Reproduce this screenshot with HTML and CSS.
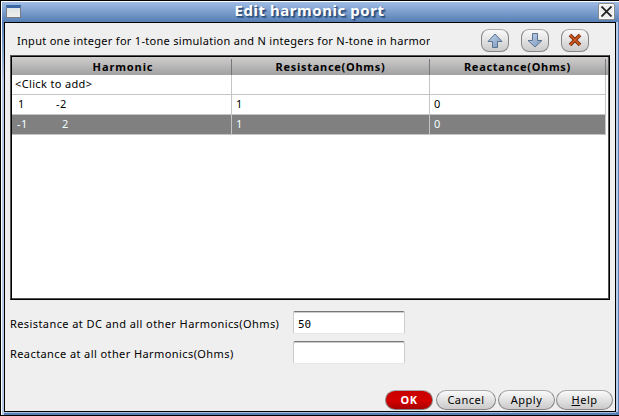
FILE: index.html
```html
<!DOCTYPE html>
<html lang="en">
<head>
<meta charset="utf-8">
<title>Edit harmonic port</title>
<link rel="stylesheet" href="styles.css">
</head>
<body>
<div class="window">
  <header class="titlebar">
    <span class="win-icon"></span>
    <h1>Edit harmonic port</h1>
    <button class="close" aria-label="Close"><svg width="11" height="11" viewBox="0 0 11 11"><path d="M.5.5 10.500 10.500M10.500.5.5 10.500" stroke="#222" stroke-width="1.800"/></svg></button>
  </header>
  <main class="content">
    <div class="toolbar">
      <p class="hint">Input one integer for 1-tone simulation and N integers for N-tone in harmon</p>
      <div class="tools">
        <button class="btn tool" aria-label="Move up"><svg width="16" height="15" viewBox="0 0 16 15"><defs><linearGradient id="blue" x2="1" y2="1"><stop stop-color="#c6d8ed"/><stop offset="1" stop-color="#7794b8"/></linearGradient></defs><path d="M8 1 15 8.500H10.500V14.500H5.500V8.500H1Z" fill="url(#blue)" stroke="#5a7391"/></svg></button>
        <button class="btn tool" aria-label="Move down"><svg width="16" height="15" viewBox="0 0 16 15"><path d="M8 14 1 7.500H5.500V.5H10.500V7.500H15Z" fill="url(#blue)" stroke="#5a7391"/></svg></button>
        <button class="btn tool" aria-label="Delete"><svg width="14" height="14" viewBox="0 0 14 14"><path d="M2 2 12 12M12 2 2 12" stroke="#74280e" stroke-width="3.600"/><path d="M2 2 12 12M12 2 2 12" stroke="#d9601f" stroke-width="1.600"/></svg></button>
      </div>
    </div>
    <div class="table">
      <div class="row head"><span class="harmonic">Harmonic</span><span>Resistance(Ohms)</span><span>Reactance(Ohms)</span></div>
      <div class="row"><span class="add">&lt;Click to add&gt;</span><span></span><span></span></div>
      <div class="row"><span class="pair"><b>1</b><b>-2</b></span><span>1</span><span>0</span></div>
      <div class="row selected"><span class="pair"><b>-1</b><b>2</b></span><span>1</span><span>0</span></div>
    </div>
    <div class="form">
      <span class="label">Resistance at DC and all other Harmonics(Ohms)</span><div class="field">50</div>
      <span class="label">Reactance at all other Harmonics(Ohms)</span><div class="field"></div>
    </div>
    <footer class="actions">
      <button class="btn ok">OK</button>
      <button class="btn cancel">Cancel</button>
      <button class="btn apply">Apply</button>
      <button class="btn help"><span><u>H</u>elp</span></button>
    </footer>
  </main>
</div>
</body>
</html>
```
FILE: styles.css
```css
* { box-sizing: border-box; }
body { margin: 0; font: 11px/14px "Noto Sans", "Open Sans", sans-serif; color: #000; }
button { font: inherit; color: inherit; padding: 0; margin: 0; border: 0; }
svg { display: block; fill: none; }
.window {
  width: 619px; height: 416px; overflow: hidden;
  display: flex; flex-direction: column;
  border: 1px solid #000; border-right: 0;
  background:
    linear-gradient(#fff, #fff) 0 0 / 1px 100% no-repeat,
    linear-gradient(#567fb500 22px, #b5c8e3 80px) 0 0 / 3px 100% no-repeat,
    linear-gradient(#fff 0 1px, #9fbce4 1px, #567fb5 21px, #567fb5);
}
.titlebar { height: 21px; flex: none; display: flex; align-items: flex-start; padding-left: 5px; }
.win-icon { width: 15px; height: 13px; margin: 4px 0 0 0; border: 1px solid #777d83; border-top: 3px solid #3a68a6; background: linear-gradient(#dde5e6, #eeeeea); }
h1 { flex: 1; margin: -1px 0 0 0; text-align: center; font-size: 15px; line-height: 21px; font-weight: 700; letter-spacing: .55px; color: #fff; text-shadow: 1px 1px 1px #2a4c7c, 2px 2px 1px #3a5c8c; }
.close { width: 17px; height: 17px; margin: 2px 4px 0 0; display: grid; place-items: center; background: #efefef; border: 1px solid #8b8b8b; border-radius: 2px; box-shadow: inset 0 0 0 1px #fff; }
.content {
  width: 612px; height: 390px; margin-left: 3px; flex: none;
  display: flex; flex-direction: column;
  border: 1px solid #000; background: #efefef;
  box-shadow: 2px 0 #b9cce8, 0 1px #a9c0e1;
  padding: 4px 0 0 5px;
}
.toolbar { height: 28px; display: flex; align-items: flex-start; padding: 2px 0 0 7px; }
.hint { margin: 5px 0 0; width: 413px; overflow: hidden; white-space: nowrap; letter-spacing: .29px; }
.tools { display: flex; gap: 12px; margin-left: 51px; }
.btn { display: flex; align-items: center; justify-content: center; background: linear-gradient(#fafafa, #e4e4e4 45%, #cacaca); border: 1px solid #858585; border-top-color: #aaa; border-radius: 10px; }
.tool { width: 28px; height: 23px; border-radius: 8px; padding-bottom: 1px; }
.table { width: 600px; height: 245px; flex: none; border: 1px solid; border-color: #555 #000 #000 #555; background: #fff; box-shadow: inset 1px 1px #000, inset -1px -1px #555; padding: 1px 0 0 1px; }
.row { display: grid; grid-template-columns: 220px 198px 176px; width: 594px; height: 20px; }
.row > span { border-right: 1px solid #c4c4c4; border-bottom: 1px solid #c4c4c4; padding: 2px 0 0 4px; }
.row.head { width: 596px; height: 18px; background: linear-gradient(#cfcccc, #a2a2a2); font-weight: 700; }
.row.head > span { border-bottom: 0; border-color: #777; margin-top: 2px; padding: 1px 0 0; text-align: center; line-height: 14px; letter-spacing: .72px; }
.row.head > .harmonic { letter-spacing: .9px; padding-left: 3px; }
.row > .add { padding-left: 3px; letter-spacing: .35px; }
.row > .pair { display: flex; padding-left: 6px; }
.pair b { font-weight: 400; width: 38px; letter-spacing: .4px; }
.selected { color: #f0ffff; }
.selected > span { background: #808080; }
.selected .pair { padding-left: 5px; }
.selected .pair b:first-child { width: 45px; }
.form { display: grid; grid-template-columns: 283px 112px; row-gap: 7px; margin-top: 11px; align-items: center; }
.label { white-space: nowrap; letter-spacing: .41px; padding-top: 2px; }
.field { height: 23px; background: #fff; border: 1px solid #ccc; border-top: 1px solid #777; border-bottom-color: #e8e8e8; border-radius: 2px; box-shadow: inset 0 1px #ccc; padding: 6px 0 0 4px; font: 11px/13px "DejaVu Sans Mono", monospace; }
.actions { display: flex; justify-content: flex-end; margin-top: auto; padding: 0 2px 1px 0; }
.actions .btn { height: 20px; border-radius: 10px; letter-spacing: .5px; }
.actions .ok { width: 48px; margin-right: 3px; background: linear-gradient(#c90000, #d30000 55%, #a80000); color: #fff; font-weight: 700; }
.actions .cancel { width: 60px; margin-right: 2px; }
.actions .apply { width: 57px; margin-right: 1px; }
.actions .help { width: 57px; }
```
